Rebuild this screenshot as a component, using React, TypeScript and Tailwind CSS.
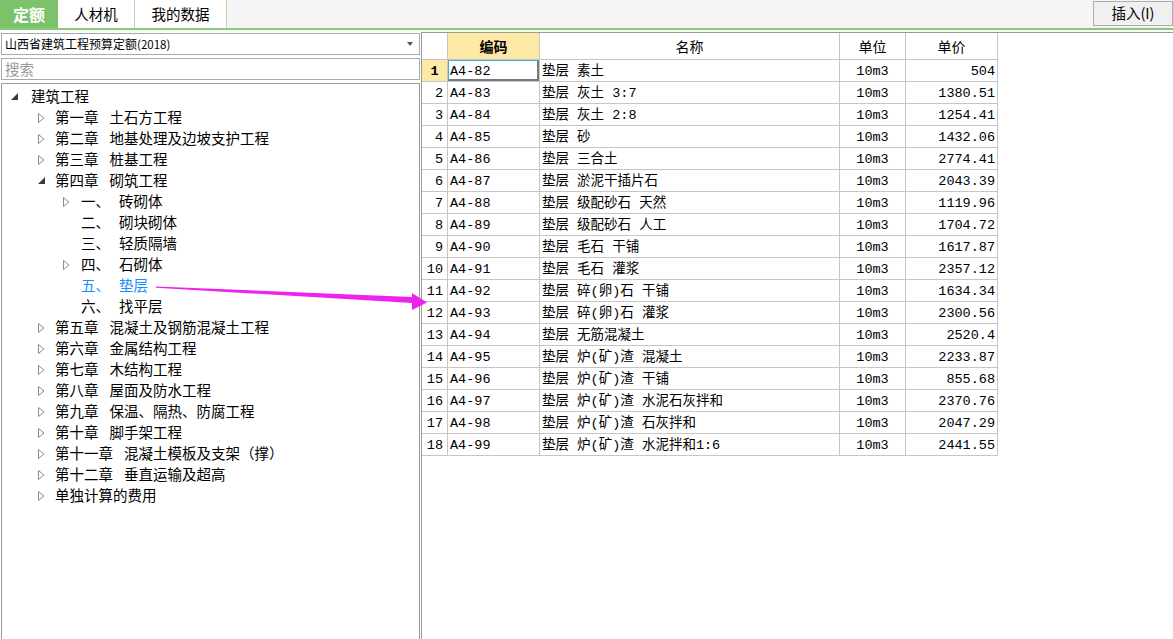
import React from "react";

type Node = {
  level: number;
  prefix?: string;
  name: string;
  arrow?: "open" | "closed";
  selected?: boolean;
};

const tree: Node[] = [
  { level: 0, name: "建筑工程", arrow: "open" },
  { level: 1, prefix: "第一章", name: "土石方工程", arrow: "closed" },
  { level: 1, prefix: "第二章", name: "地基处理及边坡支护工程", arrow: "closed" },
  { level: 1, prefix: "第三章", name: "桩基工程", arrow: "closed" },
  { level: 1, prefix: "第四章", name: "砌筑工程", arrow: "open" },
  { level: 2, prefix: "一、", name: "砖砌体", arrow: "closed" },
  { level: 2, prefix: "二、", name: "砌块砌体" },
  { level: 2, prefix: "三、", name: "轻质隔墙" },
  { level: 2, prefix: "四、", name: "石砌体", arrow: "closed" },
  { level: 2, prefix: "五、", name: "垫层", selected: true },
  { level: 2, prefix: "六、", name: "找平层" },
  { level: 1, prefix: "第五章", name: "混凝土及钢筋混凝土工程", arrow: "closed" },
  { level: 1, prefix: "第六章", name: "金属结构工程", arrow: "closed" },
  { level: 1, prefix: "第七章", name: "木结构工程", arrow: "closed" },
  { level: 1, prefix: "第八章", name: "屋面及防水工程", arrow: "closed" },
  { level: 1, prefix: "第九章", name: "保温、隔热、防腐工程", arrow: "closed" },
  { level: 1, prefix: "第十章", name: "脚手架工程", arrow: "closed" },
  { level: 1, prefix: "第十一章", name: "混凝土模板及支架（撑）", arrow: "closed" },
  { level: 1, prefix: "第十二章", name: "垂直运输及超高", arrow: "closed" },
  { level: 1, name: "单独计算的费用", arrow: "closed" },
];

const rows: [string, string, string][] = [
  ["A4-82", "垫层 素土", "504"],
  ["A4-83", "垫层 灰土 3:7", "1380.51"],
  ["A4-84", "垫层 灰土 2:8", "1254.41"],
  ["A4-85", "垫层 砂", "1432.06"],
  ["A4-86", "垫层 三合土", "2774.41"],
  ["A4-87", "垫层 淤泥干插片石", "2043.39"],
  ["A4-88", "垫层 级配砂石 天然", "1119.96"],
  ["A4-89", "垫层 级配砂石 人工", "1704.72"],
  ["A4-90", "垫层 毛石 干铺", "1617.87"],
  ["A4-91", "垫层 毛石 灌浆", "2357.12"],
  ["A4-92", "垫层 碎(卵)石 干铺", "1634.34"],
  ["A4-93", "垫层 碎(卵)石 灌浆", "2300.56"],
  ["A4-94", "垫层 无筋混凝土", "2520.4"],
  ["A4-95", "垫层 炉(矿)渣 混凝土", "2233.87"],
  ["A4-96", "垫层 炉(矿)渣 干铺", "855.68"],
  ["A4-97", "垫层 炉(矿)渣 水泥石灰拌和", "2370.76"],
  ["A4-98", "垫层 炉(矿)渣 石灰拌和", "2047.29"],
  ["A4-99", "垫层 炉(矿)渣 水泥拌和1:6", "2441.55"],
];

function Arrow({ kind }: { kind?: "open" | "closed" }) {
  if (kind === "open") {
    return (
      <svg width="8" height="8" viewBox="0 0 8 8" className="mt-[1px]">
        <polygon points="7,0 7,7 0,7" fill="#3a3a3a" />
      </svg>
    );
  }
  if (kind === "closed") {
    return (
      <svg width="7" height="10" viewBox="0 0 7 10">
        <polygon points="0.5,0.5 6,5 0.5,9.5" fill="white" stroke="#8c8c8c" strokeWidth="1" />
      </svg>
    );
  }
  return null;
}

function TreeRow({ n }: { n: Node }) {
  // indent + width of the arrow slot per level
  const pad = n.level === 0 ? "pl-[9px]" : n.level === 1 ? "pl-[36px]" : "pl-[61px]";
  const slot = n.level === 0 ? "w-[20px]" : n.level === 1 ? "w-[17px]" : "w-[18px]";
  return (
    <div className={`h-[21px] flex items-center ${pad}`}>
      <div className={`${slot} flex items-center`}>
        <Arrow kind={n.arrow} />
      </div>
      <div className={`flex items-center leading-none ${n.selected ? "text-[#1a8cff]" : "text-black"}`}>
        {n.prefix && <span className={n.level === 2 ? "mr-[9px]" : "mr-[11px]"}>{n.prefix}</span>}
        <span>{n.name}</span>
      </div>
    </div>
  );
}

export default function App() {
  const cjk = { fontFamily: '"Noto Sans CJK SC", "Noto Sans", sans-serif' };
  const mono = { fontFamily: '"Liberation Mono", "Noto Sans CJK SC", monospace' };

  return (
    <div className="relative w-[1173px] h-[639px] overflow-hidden bg-white flex flex-col" style={cjk}>
      {/* TAB BAR */}
      <div className="h-[28px] flex bg-[#f5f5f5] shrink-0">
        <div className="w-[58px] bg-[#7bc26b] text-white font-bold text-[16px] flex items-center justify-center leading-none">
          定额
        </div>
        <div className="w-[77px] bg-white border-r border-[#b5dcaa] text-[14.5px] flex items-center justify-center leading-none">
          人材机
        </div>
        <div className="w-[92px] bg-white border-r border-[#b5dcaa] text-[14.5px] flex items-center justify-center leading-none">
          我的数据
        </div>
        <div className="flex-1" />
        <div className="w-[80px] h-[25px] mt-[1px] border border-[#adadad] bg-[#f0f0f0] flex items-center justify-center text-[14.5px] leading-none">
          插入(I)
        </div>
      </div>
      <div className="h-[2px] bg-[#86cc76] shrink-0" />
      <div className="h-[2px] shrink-0" />

      {/* CONTENT */}
      <div className="flex-1 flex min-h-0">
        {/* LEFT PANEL */}
        <div className="w-[420px] flex flex-col pl-[1px] pt-[1px]">
          <div className="w-[419px] h-[22px] border border-[#a9a9a9] flex items-center justify-between pl-[3px] pr-[6px]">
            <span className="text-[12px] leading-none">
              山西省建筑工程预算定额<span className="text-[11.5px]">(2018)</span>
            </span>
            <svg width="6" height="4" viewBox="0 0 6 4">
              <polygon points="0,0 6,0 3,4" fill="#555" />
            </svg>
          </div>
          <div className="w-[419px] h-[22px] mt-[3px] border border-[#a9a9a9] flex items-center pl-[3px] text-[14.5px] text-[#9a9a9a] leading-none">
            搜索
          </div>
          <div className="w-[419px] flex-1 mt-[3px] border border-[#9a9a9a] border-b-0 pt-[2px] text-[14.5px]">
            {tree.map((n, i) => (
              <TreeRow key={i} n={n} />
            ))}
          </div>
        </div>

        {/* GRID */}
        <div className="flex-1 ml-[1px] border-l border-t border-[#9a9a9a] text-[13.5px]">
          <div className="w-[576px]">
            <div className="h-[27px] flex border-b border-[#c6c6c6] text-[14px]">
              <div className="w-[26px] border-r border-[#c6c6c6]" />
              <div className="w-[92px] border-r border-[#c6c6c6] bg-[#fde8a6] font-bold flex items-center justify-center leading-none">编码</div>
              <div className="w-[300px] border-r border-[#c6c6c6] flex items-center justify-center leading-none">名称</div>
              <div className="w-[66px] border-r border-[#c6c6c6] flex items-center justify-center leading-none">单位</div>
              <div className="w-[92px] border-r border-[#c6c6c6] flex items-center justify-center leading-none">单价</div>
            </div>
            {rows.map(([code, name, price], i) => (
              <div key={code} className="h-[22px] flex border-b border-[#c6c6c6] leading-none" style={mono}>
                <div
                  className={`w-[26px] border-r border-[#c6c6c6] flex items-center pt-[3px] ${
                    i === 0 ? "bg-[#fde8a6] font-bold justify-center" : "justify-end pr-[4px]"
                  }`}
                >
                  {i + 1}
                </div>
                <div
                  className={`w-[92px] border-r border-[#c6c6c6] flex items-center pl-[2px] pt-[3px] ${
                    i === 0 ? "shadow-[inset_1px_1px_0_#45a9dc,inset_-2px_-2px_0_#7a7a7a]" : ""
                  }`}
                >
                  {code}
                </div>
                <div className="w-[300px] border-r border-[#c6c6c6] flex items-center pl-[2px] pt-[3px] whitespace-pre">
                  {name}
                </div>
                <div className="w-[66px] border-r border-[#c6c6c6] flex items-center justify-center pt-[3px]">10m3</div>
                <div className="w-[92px] border-r border-[#c6c6c6] flex items-center justify-end pr-[2px] pt-[3px]">{price}</div>
              </div>
            ))}
          </div>
        </div>
      </div>

      {/* annotation arrow */}
      <svg className="absolute left-0 top-0 pointer-events-none" width="1173" height="639">
        <polygon points="156,286.5 412,297 412,293 427,302.5 412,310 412,303 156,287.8" fill="#ee22ee" />
      </svg>
    </div>
  );
}
